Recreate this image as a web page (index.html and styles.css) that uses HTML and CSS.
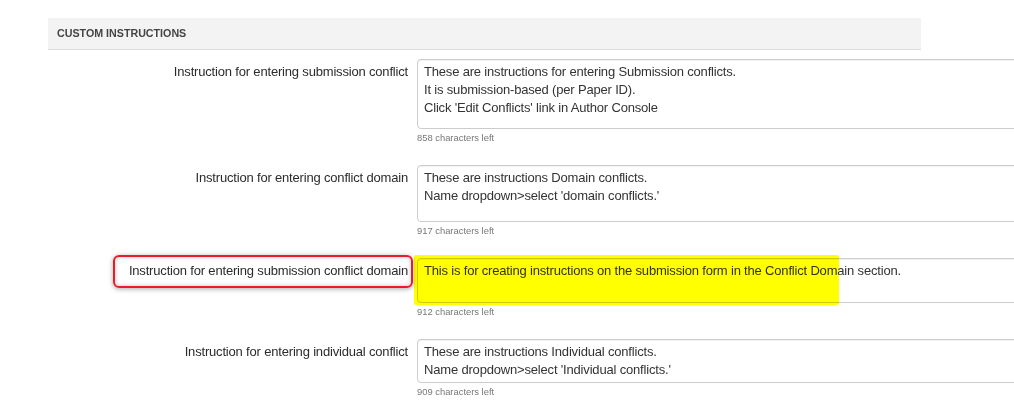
FILE: index.html
```html
<!DOCTYPE html>
<html lang="en">
<head>
<meta charset="utf-8">
<title>Custom Instructions</title>
<link rel="stylesheet" href="styles.css">
</head>
<body>
<div class="page">
  <div class="section-header">Custom Instructions</div>
  <div class="form">
    <div class="row">
      <label class="label">Instruction for entering submission conflict</label>
      <div class="field">
        <textarea class="input h70">These are instructions for entering Submission conflicts.
It is submission-based (per Paper ID).
Click 'Edit Conflicts' link in Author Console</textarea>
        <div class="counter">858 characters left</div>
      </div>
    </div>
    <div class="row">
      <label class="label">Instruction for entering conflict domain</label>
      <div class="field">
        <textarea class="input h57">These are instructions Domain conflicts.
Name dropdown&gt;select 'domain conflicts.'</textarea>
        <div class="counter">917 characters left</div>
      </div>
    </div>
    <div class="row">
      <label class="label"><span class="marked">Instruction for entering submission conflict domain</span></label>
      <div class="field highlighted">
        <textarea class="input h45">This is for creating instructions on the submission form in the Conflict Domain section.</textarea>
        <div class="highlight"></div>
        <div class="counter">912 characters left</div>
      </div>
    </div>
    <div class="row">
      <label class="label">Instruction for entering individual conflict</label>
      <div class="field">
        <textarea class="input h44">These are instructions Individual conflicts.
Name dropdown&gt;select 'Individual conflicts.'</textarea>
        <div class="counter">909 characters left</div>
      </div>
    </div>
  </div>
</div>
</body>
</html>
```

FILE: styles.css
```css
html, body {
  margin: 0;
  padding: 0;
  overflow: hidden;
  background: #fff;
}

body {
  font-family: "Liberation Sans", Arial, sans-serif;
  color: #333;
}

.page {
  padding: 18px 0 0 48px;
}

.section-header {
  width: 873px;
  height: 32px;
  line-height: 31px;
  background: #f3f3f3;
  border-bottom: 1px solid #dedede;
  padding-left: 9px;
  box-sizing: border-box;
  font-size: 10.7px;
  font-weight: bold;
  text-transform: uppercase;
  color: #444;
}

.form {
  padding-top: 9px;
}

.row {
  display: grid;
  grid-template-columns: 360px 640px;
  column-gap: 9px;
  margin-bottom: 21px;
}

.label {
  text-align: right;
  font-size: 13px;
  line-height: 18px;
  letter-spacing: -0.18px;
  padding-top: 4px;
  color: #2b2b2b;
}

.field {
  position: relative;
  display: flex;
  flex-direction: column;
}

.input {
  display: block;
  width: 640px;
  box-sizing: border-box;
  border: 1px solid #ccc;
  border-radius: 4px;
  padding: 3px 6px 2px;
  margin: 0;
  font-family: "Liberation Sans", Arial, sans-serif;
  font-size: 13px;
  line-height: 18px;
  letter-spacing: -0.18px;
  color: #333;
  background: #fff;
  resize: none;
  overflow: hidden;
  box-shadow: inset 0 1px 1px rgba(0, 0, 0, 0.06);
}

.h70 { height: 70px; }
.h57 { height: 57px; }
.h45 { height: 45px; }
.h44 { height: 44px; }

.counter {
  margin-top: 3px;
  font-size: 9.4px;
  line-height: 12px;
  color: #777;
}

.marked {
  position: relative;
  display: inline-block;
}

.marked::after {
  content: "";
  position: absolute;
  top: -7px;
  bottom: -8px;
  left: -16px;
  right: -5px;
  border: 2px solid #ec1c24;
  border-radius: 6px;
  box-shadow: 0 1px 5px rgba(0, 0, 0, 0.35), inset 0 0 4px rgba(0, 0, 0, 0.25);
  pointer-events: none;
}

.highlight {
  position: absolute;
  left: -3px;
  top: -3px;
  width: 425px;
  height: 50px;
  background: #ffff00;
  mix-blend-mode: multiply;
  border-radius: 2px;
  filter: blur(0.6px);
  pointer-events: none;
}
```
